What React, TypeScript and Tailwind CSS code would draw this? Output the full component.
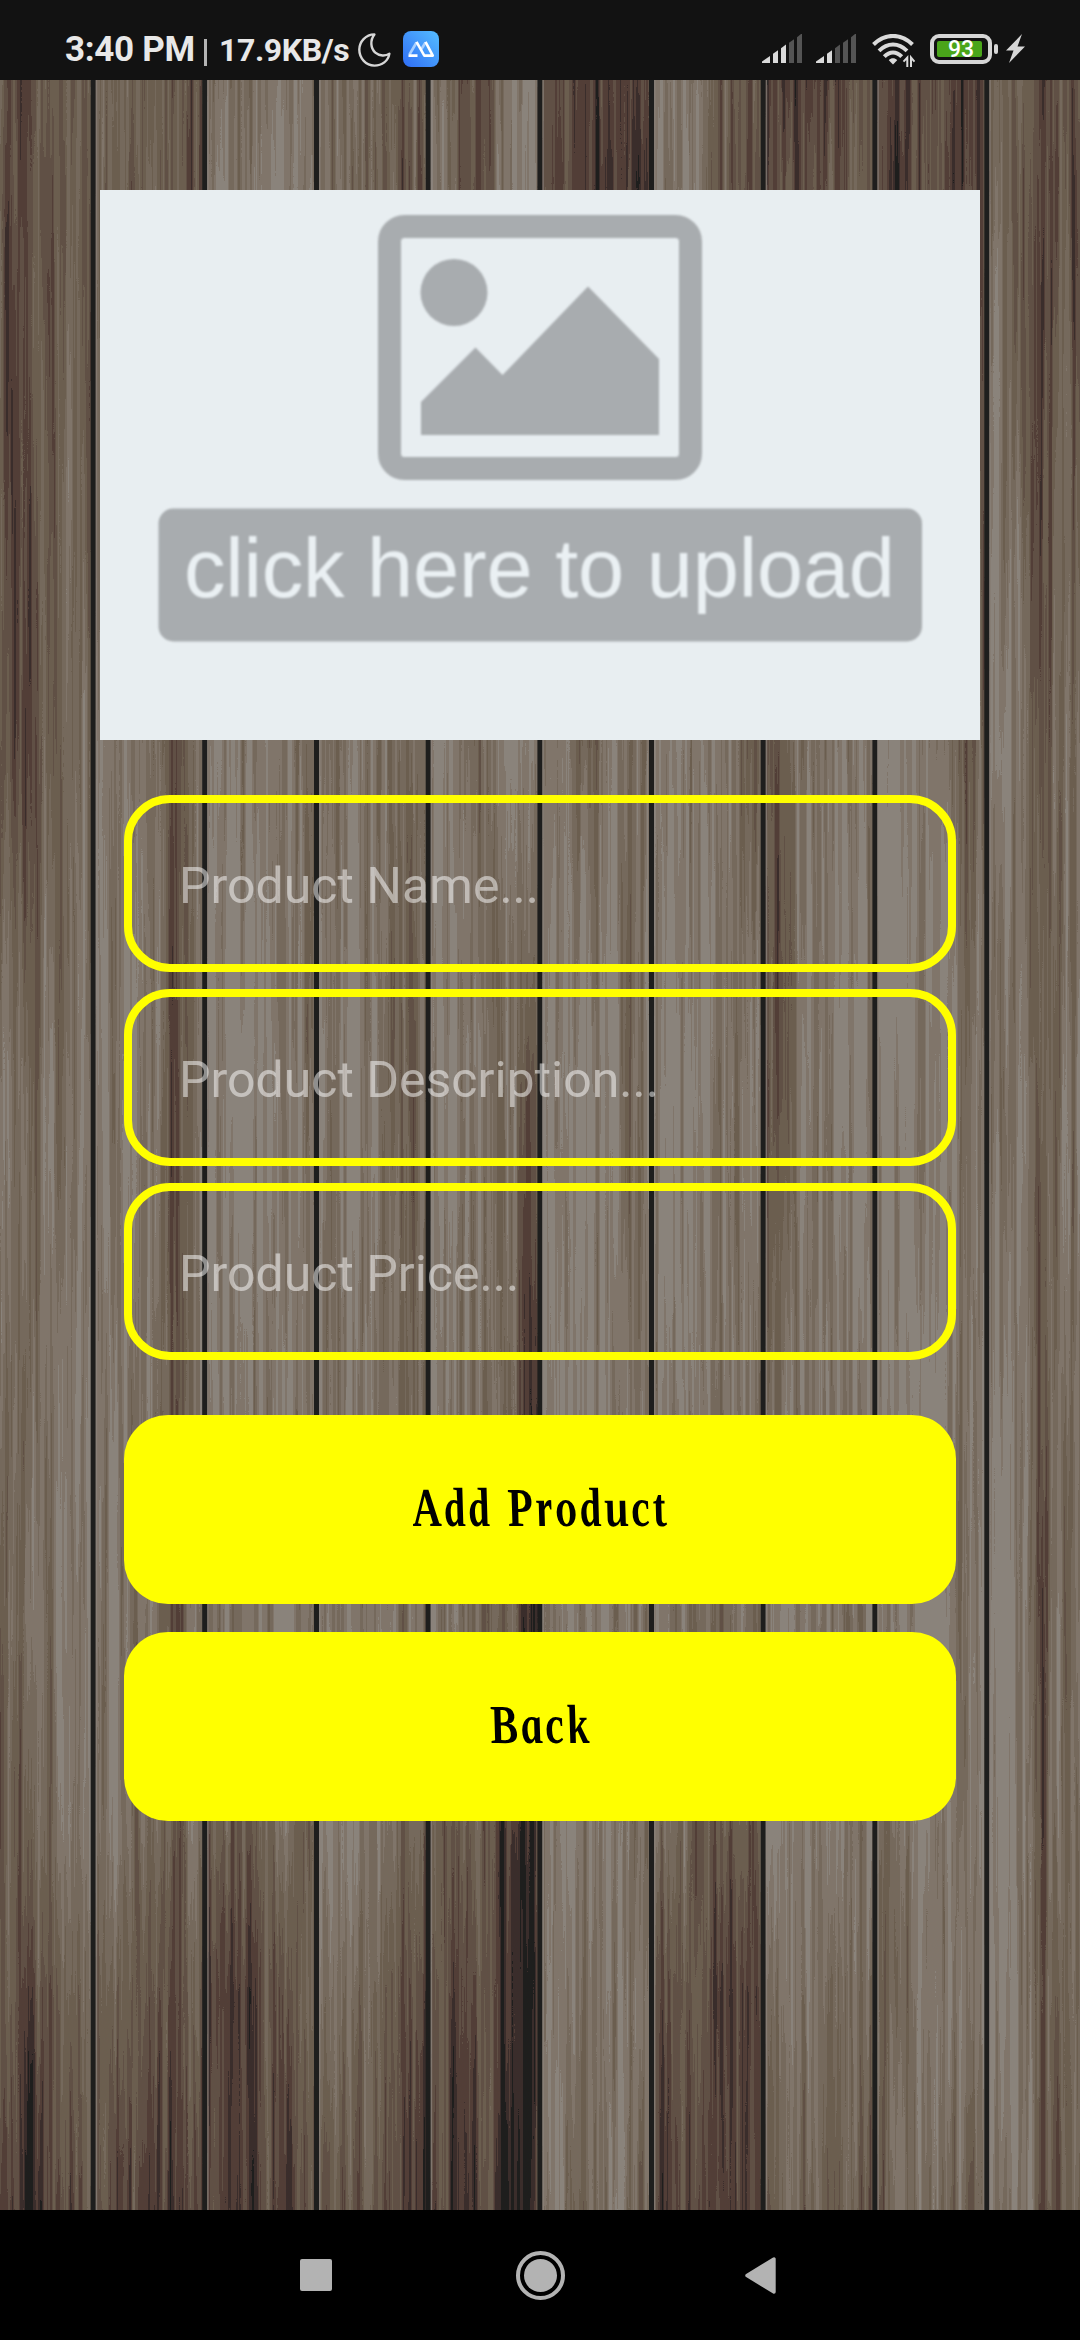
import React from "react";

const W = 1080;
const H = 2130;

// Heights at which each strip of grain has its tone set.
const ROWS = [0, 100, 670, 1020, 1540, 1750, 1920, 2130];

// [left edge, right edge, tone (0 dark .. 7 light) at each of ROWS]
const STRIPS: [number, number, number[]][] = [
  [-20, 15, [3, 3, 3, 5, 5, 4, 4, 2.5]],
  [15, 25, [2, 2, 2, 5, 5, 4, 3, 1]],
  [25, 34, [2, 2, 1.8, 4.5, 5, 3.5, 1.5, 0]],
  [34, 60, [4, 3.4, 4, 5.4, 6, 5, 3.2, 1.8]],
  [60, 92, [4, 4, 5, 6, 6.2, 6, 4.6, 3.2]],
  [92, 135, [4.6, 4, 6, 6, 6, 6, 4, 2.8]],
  [135, 165, [4, 4, 5.2, 6, 5, 4.4, 3.4, 2.6]],
  [165, 185, [4, 4, 3, 3.2, 3, 4, 2.4, 1.6]],
  [185, 204, [3, 2.4, 5, 5.6, 5, 5.4, 4.2, 3]],
  [204, 235, [5.6, 6, 6.4, 6.8, 6, 4.4, 1.8, 2]],
  [235, 260, [5, 5.2, 6, 7, 6, 4, 1.6, 1.8]],
  [260, 292, [6, 6.4, 6, 6.2, 6, 5, 3, 2.2]],
  [292, 316, [6, 6, 5, 6, 6, 4, 4.4, 3.2]],
  [316, 345, [5, 5, 5, 5.6, 5.2, 6.6, 5.4, 4.2]],
  [345, 375, [5, 4.8, 6, 6.2, 6, 6, 5, 4]],
  [375, 400, [4, 4, 5, 5, 5.4, 5, 4, 2.6]],
  [400, 428, [4, 3.4, 5.2, 4.4, 5, 4, 3, 2.2]],
  [428, 450, [5.4, 6, 6.8, 7, 6, 4, 3.6, 3]],
  [450, 460, [4, 4, 6, 6.4, 5, 1.8, 1.4, 1.4]],
  [460, 497, [3, 3, 5, 6, 5, 4.2, 3, 2]],
  [497, 520, [6, 6, 6.8, 5.6, 3.6, 1.2, 1.2, 1]],
  [520, 539, [7, 7, 6.4, 1.4, 1.8, 0.8, 0, 0]],
  [539, 575, [3, 2.4, 6, 7, 6.2, 6.8, 6, 5.4]],
  [575, 600, [2, 1.4, 4, 7, 6, 6, 5.2, 4.6]],
  [600, 625, [2.2, 2, 6, 6.4, 6, 6.4, 6, 6]],
  [625, 651, [2, 1.4, 5, 5.2, 5.2, 5.4, 5.8, 4.4]],
  [651, 690, [6, 6, 6.2, 7, 6, 5, 3, 2.4]],
  [690, 708, [5.6, 5.8, 6, 7, 5.6, 3.6, 4, 3]],
  [708, 735, [4, 4, 6, 6.2, 5, 3.6, 1.6, 1.4]],
  [735, 763, [3.4, 3, 4, 5.6, 6, 4, 2, 1.4]],
  [763, 780, [2, 2.2, 3, 3.4, 5, 6.8, 5, 4]],
  [780, 820, [2, 2.8, 5, 5.4, 6, 6.2, 6, 4.8]],
  [820, 850, [2.4, 3.2, 6, 6, 6, 6.2, 5, 4.2]],
  [850, 875, [3.8, 4, 6, 6.2, 6, 6, 5, 4]],
  [875, 890, [2.8, 2, 7, 7, 6.2, 5.2, 3.8, 3.4]],
  [890, 910, [2, 1.4, 6.8, 7, 6.8, 6, 4.4, 5]],
  [910, 950, [3, 3, 6, 6.8, 6.8, 6.2, 6, 5.2]],
  [950, 986, [2, 1.6, 4, 5.6, 6, 6, 6, 5]],
  [986, 1020, [4.4, 4.4, 6.6, 6, 6.8, 7, 6.8, 6.4]],
  [1020, 1035, [4, 4, 5, 6, 5, 6, 5, 5]],
  [1035, 1048, [2.2, 2.2, 2.6, 3, 3, 3.4, 3, 2.2]],
  [1048, 1100, [3.2, 3, 5, 5.4, 5.4, 5.2, 4.4, 4]],
];

const SEAMS = [91, 202.5, 314.3, 426, 537.7, 649.3, 761, 872.7, 984.6];

function tone(level: number) {
  const v = Math.round(((level + 0.5) / 8) * 255);
  return `rgb(${v},${v},${v})`;
}

function WoodPlanks() {
  return (
    <svg width={W} height={H} viewBox={`0 0 ${W} ${H}`} className="block [grid-area:1/1]" aria-hidden="true">
      <defs>
        {STRIPS.map(([x, , tones]) => (
          <linearGradient key={x} id={`strip${x}`} gradientUnits="userSpaceOnUse" x1="0" y1="0" x2="0" y2={H}>
            {tones.map((t, i) => (
              <stop key={i} offset={ROWS[i] / H} stopColor={tone(t)} />
            ))}
          </linearGradient>
        ))}
        <filter id="grain" filterUnits="userSpaceOnUse" x="-20" y="0" width={W + 40} height={H} colorInterpolationFilters="sRGB">
          <feGaussianBlur in="SourceGraphic" stdDeviation="3 0" result="base" />
          <feTurbulence type="fractalNoise" baseFrequency="0.17 0.0016" numOctaves="3" seed="11" />
          <feColorMatrix values="1 0 0 0 0  1 0 0 0 0  1 0 0 0 0  0 0 0 0 1" result="noise" />
          <feComposite in="base" in2="noise" operator="arithmetic" k1="0" k2="1" k3="0.85" k4="-0.425" />
          <feComponentTransfer>
            <feFuncR type="discrete" tableValues="0.118 0.231 0.322 0.38 0.42 0.459 0.502 0.545" />
            <feFuncG type="discrete" tableValues="0.118 0.18 0.247 0.314 0.369 0.412 0.459 0.514" />
            <feFuncB type="discrete" tableValues="0.114 0.169 0.216 0.271 0.31 0.361 0.416 0.486" />
          </feComponentTransfer>
        </filter>
      </defs>
      <g filter="url(#grain)">
        {STRIPS.map(([x, r]) => (
          <rect key={x} x={x} y="0" width={r - x + 1} height={H} fill={`url(#strip${x})`} />
        ))}
      </g>
      {SEAMS.map((x) => (
        <g key={x}>
          <rect x={x - 0.3} y="0" width="5" height={H} fill="#1e1e1d" />
          <rect x={x + 4.7} y="0" width="1.5" height={H} fill="#8b837c" fillOpacity="0.75" />
        </g>
      ))}
    </svg>
  );
}

function Signal({ active }: { active: number }) {
  const bars = [
    "M0 29V27.5L8 22V29Z",
    "M11 29V19.8L16 16.2V29Z",
    "M19 29V14.2L24 10.6V29Z",
    "M27 29V8.8L32 5.2V29Z",
    "M35 29V3.2L39 0H40V29Z",
  ];
  return (
    <svg width="40" height="29" viewBox="0 0 40 29">
      {bars.map((d, i) => (
        <path key={d} d={d} fill={i < active ? "#dadada" : "#545454"} />
      ))}
    </svg>
  );
}

function StatusBar() {
  return (
    <header className="flex h-20 items-start bg-[#121212] pl-[65px] font-[Roboto,sans-serif] text-[#e8e8e8]">
      <span className="mt-[29px] w-[139px] whitespace-nowrap text-[35px] leading-[41px] font-bold tracking-[-0.3px]">3:40 PM</span>
      <span className="mt-[39px] h-[27px] w-[3px] bg-[#b4b4b4]" />
      <span className="mt-[30px] ml-3 w-[138px] whitespace-nowrap text-[32px] leading-[40px] font-bold tracking-[-0.4px]">17.9KB/s</span>
      <svg className="mt-[33px] ml-px" width="33" height="34" viewBox="0 0 33 34" fill="none" stroke="#d6d6d6" strokeWidth="2.4" strokeLinejoin="round">
        <path d="M16.4 1.4C7.6 1.6 1.3 8.6 1.3 16.6 1.3 25.4 8 32.6 16.4 32.6 24 32.6 30.2 28 31.4 20.6 27.500 23.400 21.500 23.200 17.300 19.600 12.600 15.400 11.800 7.200 16.400 1.400Z" />
      </svg>
      <svg className="mt-[31px] ml-3" width="36" height="36" viewBox="0 0 36 36" fill="none">
        <defs>
          <linearGradient id="badge" x1="0" y1="1" x2="1" y2="0">
            <stop offset="0" stopColor="#2f6df6" />
            <stop offset="1" stopColor="#55bdff" />
          </linearGradient>
        </defs>
        <rect width="36" height="36" rx="8" fill="url(#badge)" />
        <path d="M6.500 23.500L13.500 11.500" stroke="#a9d0ff" strokeWidth="2.600" />
        <path d="M18.500 18L22.500 11.500" stroke="#a9d0ff" strokeWidth="2.600" />
        <path d="M5.500 24.600H14.500M13.500 10.800L21.300 24.600H29.800L22.500 10.800" stroke="#fff" strokeWidth="2.600" strokeLinejoin="round" />
      </svg>

      <div className="mt-[34px] mr-[55px] ml-auto flex items-start">
        <Signal active={3} />
        <div className="ml-[14px]">
          <Signal active={2} />
        </div>
        <svg className="ml-4" width="43" height="34" viewBox="0 0 43 34" fill="none" stroke="#dadada" strokeWidth="4">
          <path d="M1.500 10.500C13 -1 29 -1 40.500 10.500" />
          <path d="M7 16.800C15.500 8.400 26.500 8.400 35 16.800" />
          <path d="M12.300 22.600C17.600 17 24.400 17 29.700 22.600" />
          <path d="M21 30.500L16.800 26.300C19.200 23.700 22.800 23.700 25.200 26.300Z" fill="#dadada" stroke="none" />
          <path d="M35.300 33V23.500L31.500 27.600M39 33V23.500L42.500 27.600" strokeWidth="2" />
        </svg>
        <div className="ml-[15px] flex h-[30px] w-[62px] items-center justify-start rounded-[9px] border-4 border-[#d6d6d6] pl-[3px]">
          <span className="flex h-4 w-[45px] items-center justify-center rounded-[2px] bg-[#4aa51a] text-[23px] leading-4 font-medium text-white">
            <span className="translate-x-[1.500px] translate-y-px">93</span>
          </span>
        </div>
        <span className="mt-[10px] ml-[2px] h-[10px] w-1 rounded-[2px] bg-[#d6d6d6]" />
        <svg className="ml-2" width="19" height="29" viewBox="0 0 19 29">
          <path d="M16 0L0 16.500H7.500L3 29L19 12.500H11.500Z" fill="#d6d6d6" />
        </svg>
      </div>
    </header>
  );
}

function UploadCard() {
  return (
    <button type="button" className="block h-[550px] w-[880px] bg-[#e8eef1]">
      <svg width="880" height="550" viewBox="0 0 880 550">
        <g className="blur-[0.8px]">
          <rect x="289.500" y="36.500" width="301" height="242" rx="15" fill="none" stroke="#a8acaf" strokeWidth="23" />
          <circle cx="354" cy="102.500" r="33.500" fill="#a8acaf" />
          <path d="M321 245V212L375.500 157.500L402.500 185L488 96.500L559 169V245Z" fill="#a8acaf" />
          <rect x="58.500" y="318.500" width="763.500" height="133" rx="15" fill="#a8acaf" />
          <text x="84" y="407" textLength="711" fontFamily="Liberation Sans, Arial, sans-serif" fontSize="83" fill="#eaf0f3">
            click here to upload
          </text>
        </g>
      </svg>
    </button>
  );
}

function Field({ placeholder }: { placeholder: string }) {
  return (
    <input
      type="text"
      placeholder={placeholder}
      className="block h-[177px] w-[832px] rounded-[46px] border-8 border-[#ffff00] bg-transparent pt-1 pl-[47px] font-[Roboto,sans-serif] text-[50px] text-white outline-none placeholder:text-white/50"
    />
  );
}

function ActionButton({ label }: { label: string }) {
  return (
    <button
      type="button"
      className="flex h-[189px] w-[832px] items-center justify-center rounded-[44px] bg-[#ffff00] pb-[5px] font-['Liberation_Serif',serif] text-[55px] leading-none font-bold tracking-[4px] text-black italic"
    >
      <span className="scale-x-[0.775] skew-x-12">{label}</span>
    </button>
  );
}

function NavBar() {
  return (
    <nav className="flex h-[130px] items-center bg-black pl-[300px]">
      <span className="h-8 w-8 rounded-[2px] bg-[#b3b3b3]" />
      <svg className="ml-[184px]" width="49" height="49" viewBox="0 0 49 49">
        <circle cx="24.500" cy="24.500" r="22.500" fill="none" stroke="#b3b3b3" strokeWidth="4" />
        <circle cx="24.500" cy="24.500" r="16.500" fill="#b3b3b3" />
      </svg>
      <svg className="ml-[180px]" width="31" height="37" viewBox="0 0 31 37">
        <path d="M2 18.500L29 2V35Z" fill="#b3b3b3" stroke="#b3b3b3" strokeWidth="3.400" strokeLinejoin="round" />
      </svg>
    </nav>
  );
}

export default function App() {
  return (
    <div className="flex h-[2340px] w-[1080px] flex-col overflow-hidden">
      <StatusBar />
      <main className="grid h-[2130px]">
        <WoodPlanks />
        <div className="z-10 flex flex-col items-center pt-[110px] [grid-area:1/1]">
          <UploadCard />
          <div className="mt-[55px] flex flex-col gap-[17px]">
            <Field placeholder="Product Name..." />
            <Field placeholder="Product Description..." />
            <Field placeholder="Product Price..." />
          </div>
          <div className="mt-[55px] flex flex-col gap-7">
            <ActionButton label="Add Product" />
            <ActionButton label="Back" />
          </div>
        </div>
      </main>
      <NavBar />
    </div>
  );
}
